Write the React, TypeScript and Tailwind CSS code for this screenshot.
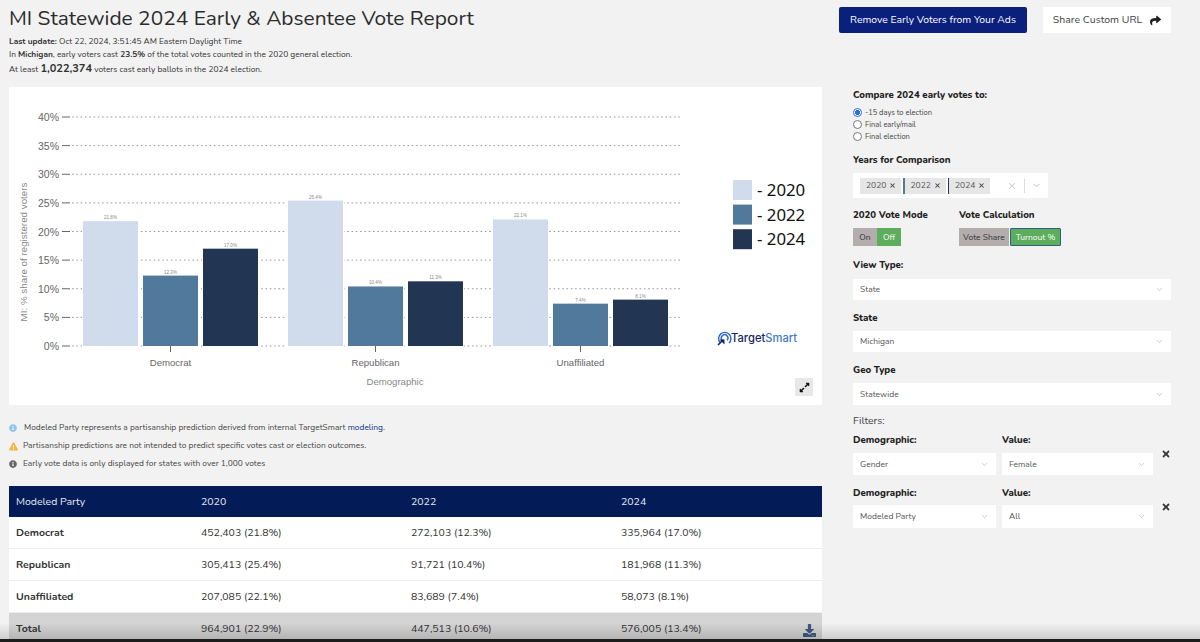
import React from "react";
import { ChevronDown, X } from "lucide-react";
import { FaInfoCircle, FaExclamationTriangle, FaShare, FaExpandAlt, FaTimes, FaDownload } from "react-icons/fa";

const font = "font-['Nunito','Noto_Sans','Open_Sans',sans-serif]";

const groups = [
    { name: "Democrat", x: 83, vals: [21.8, 12.3, 17.0] },
    { name: "Republican", x: 288, vals: [25.4, 10.4, 11.3] },
    { name: "Unaffiliated", x: 493, vals: [22.1, 7.4, 8.1] },
];
const colors = ["#d0dcec", "#50799c", "#223553"];
const ticks = [0, 5, 10, 15, 20, 25, 30, 35, 40];
const rows = [
    ["Democrat", "452,403 (21.8%)", "272,103 (12.3%)", "335,964 (17.0%)"],
    ["Republican", "305,413 (25.4%)", "91,721 (10.4%)", "181,968 (11.3%)"],
    ["Unaffiliated", "207,085 (22.1%)", "83,689 (7.4%)", "58,073 (8.1%)"],
];

const yOf = (v: number) => 346 - (v / 40) * 229;

const Chart = () => (
    <svg width="813" height="318" viewBox="9 87 813 318" className="block">
        <g fontFamily="'Liberation Sans', sans-serif">
            {ticks.map((t) => (
                <g key={t}>
                    <line x1="62" x2="70" y1={yOf(t)} y2={yOf(t)} stroke="#666" strokeWidth="1" />
                    <line x1="72" x2="680" y1={yOf(t)} y2={yOf(t)} stroke="#999" strokeWidth="1" strokeDasharray="1.6 2.7" />
                    <text x="59" y={yOf(t) + 4} textAnchor="end" fontSize="10.5" fill="#666">{t}%</text>
                </g>
            ))}
            {groups.map((g) => (
                <g key={g.name}>
                    {g.vals.map((v, i) => {
                        const bx = g.x + i * 60;
                        return (
                            <g key={i}>
                                <rect x={bx} y={yOf(v)} width="55" height={346 - yOf(v)} fill={colors[i]} stroke="#fff" strokeWidth="2" paintOrder="stroke" />
                                <text x={bx + 27.5} y={yOf(v) - 2} textAnchor="middle" fontSize="4.5" fill="#888">{v.toFixed(1)}%</text>
                            </g>
                        );
                    })}
                    <line x1={g.x + 87.5} x2={g.x + 87.5} y1="346" y2="352" stroke="#666" />
                    <text x={g.x + 87.5} y="366" textAnchor="middle" fontSize="9.6" fill="#666">{g.name}</text>
                </g>
            ))}
            <text x="395" y="385" textAnchor="middle" fontSize="9.6" fill="#888">Demographic</text>
            <text transform="translate(27 252) rotate(-90)" textAnchor="middle" x="0" y="0" fontSize="9.8" fill="#888">MI: % share of registered voters</text>
        </g>
        <g fontFamily="'Noto Sans', sans-serif" fontSize="16.8" fill="#111">
            {["2020", "2022", "2024"].map((y, i) => (
                <g key={y}>
                    <rect x="733" y={180 + i * 24.6} width="19" height="20" fill={colors[i]} />
                    <text x="757" y={196 + i * 24.6}>- {y}</text>
                </g>
            ))}
        </g>
        {/* TargetSmart logo */}
        <g fill="none" stroke="#2a68c8" strokeWidth="1.4">
            <path d="M720 342.5a6.2 6.2 0 1 1 9 0.6" />
            <path d="M722 340a3.3 3.3 0 1 1 5 0.3" />
        </g>
        <path d="M718 345l5-5" stroke="#14265f" strokeWidth="1.6" fill="none" />
        <path d="M719.5 339.5h5v5z" fill="#14265f" />
        <text x="731" y="342" fontFamily="Inter, sans-serif" fontSize="11.2" fontWeight="500">
            <tspan fill="#14265f">Target</tspan>
            <tspan fill="#3f78c8">Smart</tspan>
        </text>
    </svg>
);

const Select = ({ value, className }: { value: string; className: string }) => (
    <div className={`flex items-center justify-between bg-white pl-[7px] pr-[7px] text-[8.5px] text-[#555] ${className}`}>
        <span>{value}</span>
        <ChevronDown size={9} strokeWidth={1.5} className="text-[#aaa]" />
    </div>
);

const Label = ({ children, className = "" }: { children: React.ReactNode; className?: string }) => (
    <div className={`text-[9.65px] leading-[14px] font-extrabold text-[#222] ${className}`}>{children}</div>
);

const Radio = ({ label, checked }: { label: string; checked?: boolean }) => (
    <div className="flex items-center gap-[3px] h-[11.7px] text-[7.5px] text-[#444]">
        <span className={`w-[9px] h-[9px] rounded-full border ${checked ? "border-[#2b6fe0] bg-[radial-gradient(circle,#2b6fe0_45%,#fff_55%)]" : "border-[#777] bg-white"}`} />
        {label}
    </div>
);

const Chip = ({ label }: { label: string }) => (
    <div className="flex shrink-0 items-center justify-between w-[41px] h-[16px] pl-[6px] pr-[5px] bg-[#e6e6e6] text-[8.5px] text-[#555]">
        {label}
        <X size={7} strokeWidth={3.5} className="text-[#444]" />
    </div>
);

export default function App() {
    return (
        <div className={`relative w-[1200px] h-[642px] overflow-hidden bg-[#f2f2f2] ${font}`}>
            {/* header */}
            <div className="flex h-[87px]">
                <div className="w-[830px] pl-[9px] pt-[3px] text-[#333]">
                    <h1 className="text-[20.9px] leading-[31px] font-normal text-[#2b2b2b] whitespace-nowrap">MI Statewide 2024 Early &amp; Absentee Vote Report</h1>
                    <p className="text-[8.35px] leading-[14px] mt-[1px]"><b>Last update:</b> Oct 22, 2024, 3:51:45 AM Eastern Daylight Time</p>
                    <p className="text-[8.35px] leading-[14px] mt-[-1px]">In <b>Michigan</b>, early voters cast <b>23.5%</b> of the total votes counted in the 2020 general election.</p>
                    <p className="text-[8.35px] leading-[14px]">At least <b className="text-[11px]">1,022,374</b> voters cast early ballots in the 2024 election.</p>
                </div>
                <div className="flex items-start gap-[16px] pl-[9px] pt-[7px]">
                    <button className="w-[188px] h-[26px] rounded-[2px] bg-[#0b1f7d] text-white text-[10.4px]">Remove Early Voters from Your Ads</button>
                    <button className="flex items-center justify-center gap-[8px] w-[128px] h-[26px] bg-white text-[#444] text-[10.5px]">
                        Share Custom URL <FaShare size={11} className="text-[#222]" />
                    </button>
                </div>
            </div>

            <div className="flex">
                {/* left column */}
                <div className="w-[822px] pl-[9px]">
                    <div className="bg-white w-[813px] h-[318px] relative">
                        <Chart />
                        <div className="absolute left-[786px] top-[291px] w-[18px] h-[18px] bg-[#e8e8e8] flex items-center justify-center">
                            <FaExpandAlt size={11} className="text-[#111]" />
                        </div>
                    </div>
                    <div className="mt-[16px] flex flex-col gap-[4px] text-[8.4px] leading-[14px] text-[#444]">
                        <div className="flex items-center gap-[7px]"><FaInfoCircle size={8} className="text-[#8cc4ee]" /><span>Modeled Party represents a partisanship prediction derived from internal TargetSmart <span className="text-[#0f2f8f]">modeling.</span></span></div>
                        <div className="flex items-center gap-[5px]"><FaExclamationTriangle size={9} className="text-[#f0b43c]" />Partisanship predictions are not intended to predict specific votes cast or election outcomes.</div>
                        <div className="flex items-center gap-[6px]"><FaInfoCircle size={8} className="text-[#666]" />Early vote data is only displayed for states with over 1,000 votes</div>
                    </div>
                    <div className="mt-[15px] w-[813px] text-[10.5px] text-[#333]">
                        <div className="grid grid-cols-[185px_210px_210px_1fr] items-center h-[31px] pl-[7px] pt-[1px] bg-[#031c58] text-[#e6e8f0]">
                            <span>Modeled Party</span><span>2020</span><span>2022</span><span>2024</span>
                        </div>
                        {rows.map((r) => (
                            <div key={r[0]} className="grid grid-cols-[185px_210px_210px_1fr] items-center h-[32px] pl-[7px] pt-[1px] bg-white border-b border-[#eee]">
                                <b className="font-bold">{r[0]}</b><span>{r[1]}</span><span>{r[2]}</span><span>{r[3]}</span>
                            </div>
                        ))}
                        <div className="relative grid grid-cols-[185px_210px_210px_1fr] items-center h-[32px] pl-[7px] bg-[#d4d4d4]">
                            <b className="font-bold">Total</b><span>964,901 (22.9%)</span><span>447,513 (10.6%)</span><span>576,005 (13.4%)</span>
                            <FaDownload size={13} className="absolute right-[6px] top-[11px] text-[#3d5a80]" />
                        </div>
                    </div>
                </div>

                {/* right column */}
                <div className="ml-[31px] w-[330px] pt-[1px]">
                    <Label>Compare 2024 early votes to:</Label>
                    <div className="mt-[5px]">
                        <Radio label="-15 days to election" checked />
                        <Radio label="Final early/mail" />
                        <Radio label="Final election" />
                    </div>
                    <Label className="mt-[11px]">Years for Comparison</Label>
                    <div className="mt-[6px] flex items-center w-[195px] h-[25px] bg-white pl-[7px]">
                        <Chip label="2020" />
                        <span className="shrink-0 w-[1.5px] h-[16px] ml-[2px] bg-[#50799c]" />
                        <Chip label="2022" />
                        <span className="shrink-0 w-[1.5px] h-[16px] ml-[2px] bg-[#223553]" />
                        <Chip label="2024" />
                        <X size={10} strokeWidth={2.5} className="shrink-0 ml-[17px] text-[#ccc]" />
                        <span className="shrink-0 ml-[7px] w-px h-[14px] bg-[#ddd]" />
                        <ChevronDown size={11} className="shrink-0 ml-[6px] text-[#bbb]" />
                    </div>
                    <div className="mt-[10px] flex">
                        <div className="w-[106px]">
                            <Label>2020 Vote Mode</Label>
                            <div className="mt-[6px] flex w-[48px] h-[18px] text-[8.5px] leading-[18px] text-center">
                                <span className="w-[24px] bg-[#b3adad] text-[#333]">On</span>
                                <span className="w-[24px] bg-[#5cad5c] text-white">Off</span>
                            </div>
                        </div>
                        <div>
                            <Label>Vote Calculation</Label>
                            <div className="mt-[6px] flex w-[102px] h-[18px] text-[8.5px] leading-[16px] text-center">
                                <span className="w-[50px] bg-[#b3adad] text-[#333] leading-[18px]">Vote Share</span>
                                <span className="ml-[1px] w-[51px] bg-[#5cad5c] text-white border border-[#2f5f8f] rounded-[1px]">Turnout %</span>
                            </div>
                        </div>
                    </div>
                    <Label className="mt-[12px]">View Type:</Label>
                    <Select value="State" className="mt-[7px] w-[318px] h-[21px]" />
                    <Label className="mt-[11px]">State</Label>
                    <Select value="Michigan" className="mt-[6px] w-[318px] h-[21px]" />
                    <Label className="mt-[11px]">Geo Type</Label>
                    <Select value="Statewide" className="mt-[6px] w-[318px] h-[22px]" />
                    <div className="mt-[9px] text-[10.5px] leading-[14px] text-[#444]">Filters:</div>
                    <div className="mt-[5px] flex">
                        <div className="w-[149px]">
                            <Label>Demographic:</Label>
                            <Select value="Gender" className="mt-[6px] w-[143px] h-[22px]" />
                        </div>
                        <div className="w-[151px]">
                            <Label>Value:</Label>
                            <Select value="Female" className="mt-[6px] w-[151px] h-[22px]" />
                        </div>
                        <FaTimes size={10} className="ml-[8px] mt-[16px] text-[#333]" />
                    </div>
                    <div className="mt-[11px] flex">
                        <div className="w-[149px]">
                            <Label>Demographic:</Label>
                            <Select value="Modeled Party" className="mt-[5px] w-[143px] h-[23px]" />
                        </div>
                        <div className="w-[151px]">
                            <Label>Value:</Label>
                            <Select value="All" className="mt-[5px] w-[151px] h-[23px]" />
                        </div>
                        <FaTimes size={10} className="ml-[8px] mt-[16px] text-[#333]" />
                    </div>
                </div>
            </div>

            {/* window edge at the bottom of the capture */}
            <div className="absolute left-0 right-0 bottom-[3px] h-[16px] bg-gradient-to-b from-transparent to-black/15" />
            <div className="absolute left-0 right-0 bottom-0 h-[3px] bg-[#1c1c1c]" />
        </div>
    );
}
